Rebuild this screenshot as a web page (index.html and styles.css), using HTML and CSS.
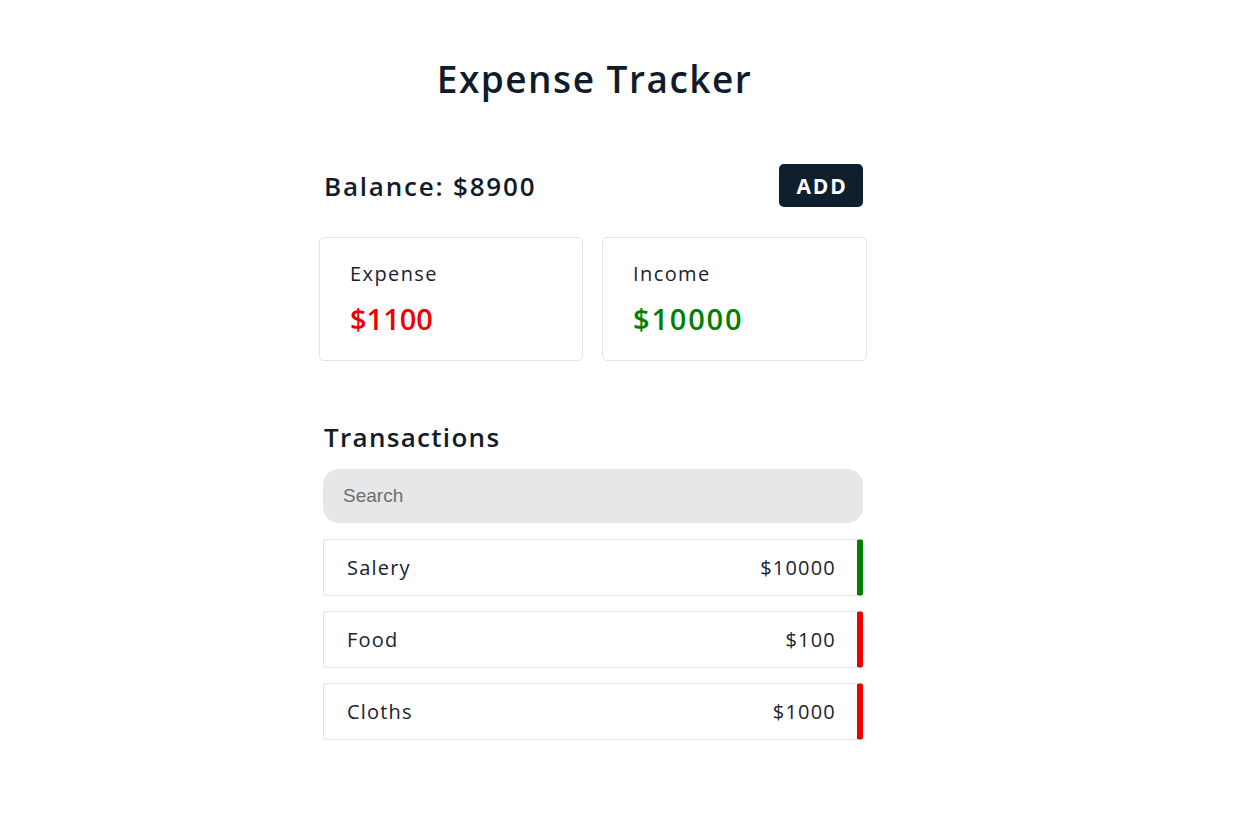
FILE: index.html
```html
<!DOCTYPE html>
<html lang="en">
<head>
<meta charset="utf-8">
<title>Expense Tracker</title>
<link rel="stylesheet" href="styles.css">
</head>
<body>
<main class="app">
  <h1 class="title">Expense Tracker</h1>
  <section class="balance-row">
    <h2 class="balance">Balance: $8900</h2>
    <button class="add-btn">ADD</button>
  </section>
  <section class="summary">
    <div class="card">
      <div class="card-label">Expense</div>
      <div class="card-value expense">$1100</div>
    </div>
    <div class="card">
      <div class="card-label">Income</div>
      <div class="card-value income">$10000</div>
    </div>
  </section>
  <section class="transactions">
    <h2 class="tx-title">Transactions</h2>
    <input class="search" type="text" placeholder="Search">
    <ul class="tx-list">
      <li class="tx tx-income"><span>Salery</span><span>$10000</span></li>
      <li class="tx tx-expense"><span>Food</span><span>$100</span></li>
      <li class="tx tx-expense"><span>Cloths</span><span>$1000</span></li>
    </ul>
  </section>
</main>
</body>
</html>
```
FILE: styles.css
```css
* { box-sizing: border-box; }
body {
  margin: 0;
  background: #fff;
  font-family: "Open Sans", "Noto Sans", sans-serif;
  color: #111c2b;
}
.app {
  width: 548px;
  margin-left: 319px;
  padding-top: 54px;
}
.title {
  margin: 0;
  text-align: center;
  font-size: 37px;
  font-weight: 600;
  line-height: 50px;
  letter-spacing: 1.5px;
  padding-left: 3px;
}
.balance-row {
  display: flex;
  justify-content: space-between;
  align-items: center;
  padding: 0 4px 0 5px;
  margin-top: 60px;
}
.balance {
  margin: 0;
  font-size: 26px;
  font-weight: 600;
  letter-spacing: 1.8px;
}
.add-btn {
  width: 84px;
  height: 43px;
  border: none;
  border-radius: 5px;
  background: #0f1f2e;
  color: #fff;
  font-family: inherit;
  font-size: 21px;
  font-weight: 700;
  letter-spacing: 1.8px;
  padding: 0 0 0 2px;
}
.summary {
  display: grid;
  grid-template-columns: 264px 265px;
  justify-content: space-between;
  margin-top: 30px;
}
.card {
  height: 124px;
  border: 1px solid #e4e4e4;
  border-radius: 5px;
  padding: 22px 30px;
}
.card-label {
  font-size: 20px;
  line-height: 28px;
  letter-spacing: 1.4px;
  color: #1a2230;
}
.card-value {
  margin-top: 13px;
  font-size: 29px;
  font-weight: 600;
  line-height: 36px;
  letter-spacing: 0;
}
.expense { color: #ee0000; }
.income { color: #008000; letter-spacing: 1.8px; }
.transactions {
  margin-top: 58px;
  padding: 0 4px;
}
.tx-title {
  margin: 0;
  font-size: 26px;
  font-weight: 600;
  line-height: 36px;
  letter-spacing: 1.3px;
  padding-left: 1px;
}
.search {
  display: block;
  width: 100%;
  height: 54px;
  margin-top: 14px;
  border: none;
  border-radius: 16px;
  background: #e6e7e9;
  padding: 0 20px;
  font-family: "Liberation Sans", Arial, sans-serif;
  font-size: 19px;
  color: #333;
  outline: none;
}
.search::placeholder { color: #6e6e6e; }
.tx-list {
  list-style: none;
  margin: 16px 0 0;
  padding: 0;
  display: flex;
  flex-direction: column;
  gap: 15px;
}
.tx {
  height: 57px;
  display: flex;
  justify-content: space-between;
  align-items: center;
  border: 1px solid #e2e2e2;
  border-right-width: 6px;
  border-radius: 3px;
  padding: 0 21px 0 23px;
  font-size: 20px;
  letter-spacing: 1.2px;
  color: #1a2230;
}
.tx-income { border-right-color: #008000; }
.tx-expense { border-right-color: #ee0000; }
```
